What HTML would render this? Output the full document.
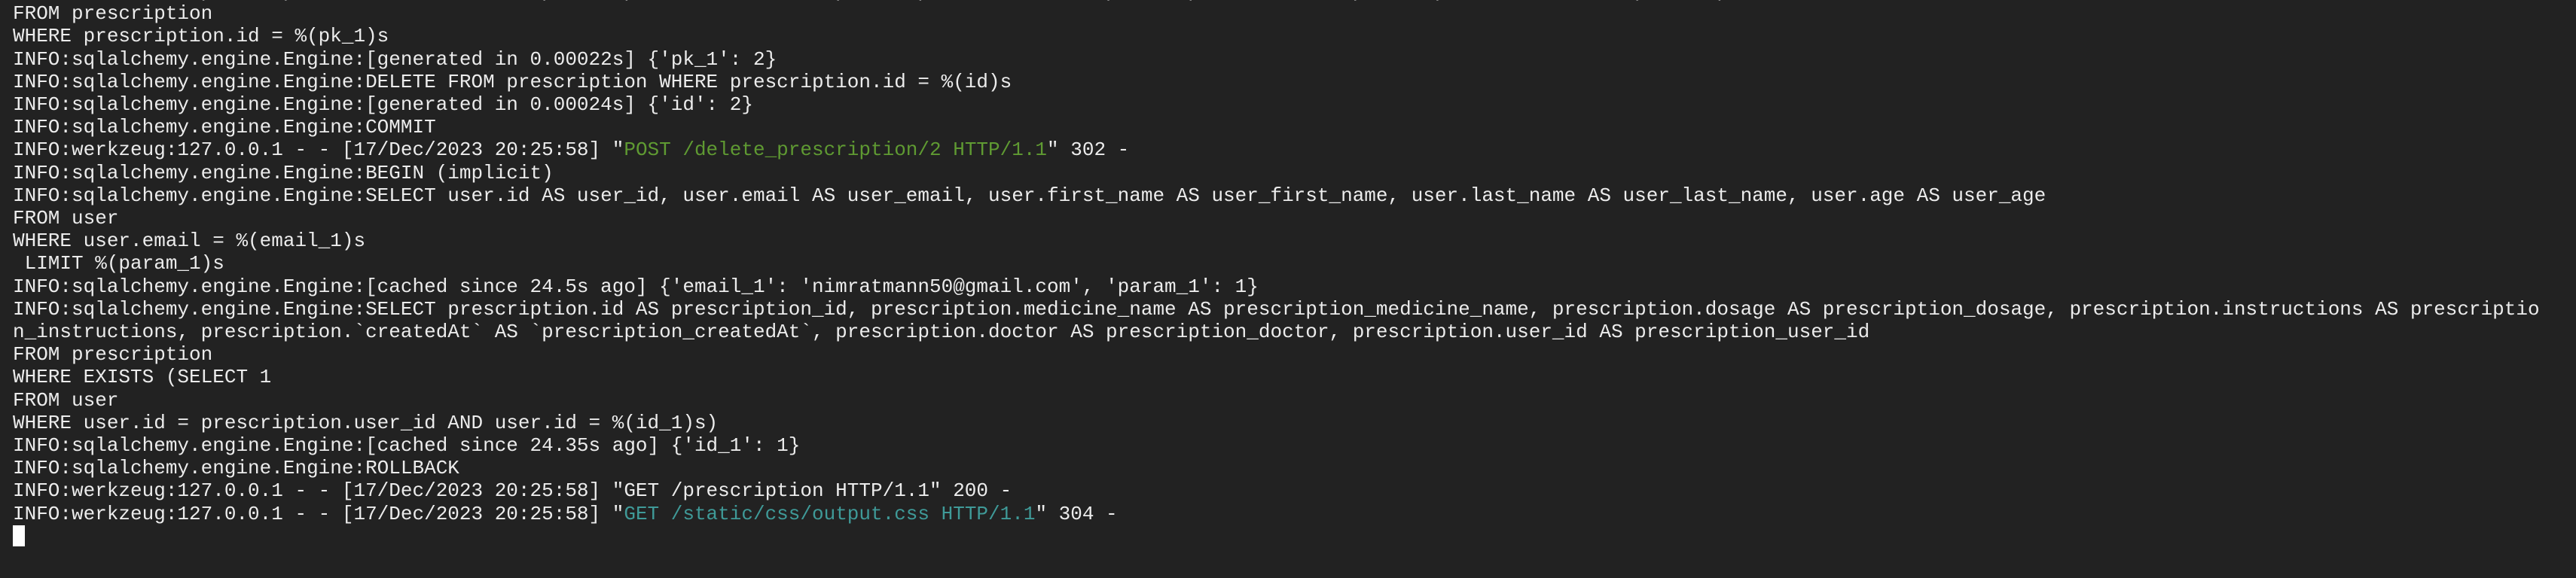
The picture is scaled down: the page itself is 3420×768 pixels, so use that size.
<!DOCTYPE html>
<html><head><meta charset="utf-8"><style>
html,body{margin:0;padding:0;background:#222222;width:3420px;height:768px;overflow:hidden}
pre{margin:0;position:absolute;left:17px;top:-27px;font-family:"Liberation Mono",monospace;font-size:26px;line-height:30.2px;color:#ececec;white-space:pre}
.g{color:#5f9a32}.t{color:#3f9a98}
.cur{display:inline-block;width:16px;height:28px;background:#fff;vertical-align:-6px}
</style></head><body><pre>n_instructions, prescription.`createdAt` AS `prescription_createdAt`, prescription.doctor AS prescription_doctor, prescription.user_id AS prescription_user_id
FROM prescription
WHERE prescription.id = %(pk_1)s
INFO:sqlalchemy.engine.Engine:[generated in 0.00022s] {'pk_1': 2}
INFO:sqlalchemy.engine.Engine:DELETE FROM prescription WHERE prescription.id = %(id)s
INFO:sqlalchemy.engine.Engine:[generated in 0.00024s] {'id': 2}
INFO:sqlalchemy.engine.Engine:COMMIT
INFO:werkzeug:127.0.0.1 - - [17/Dec/2023 20:25:58] "<span class="g">POST /delete_prescription/2 HTTP/1.1</span>" 302 -
INFO:sqlalchemy.engine.Engine:BEGIN (implicit)
INFO:sqlalchemy.engine.Engine:SELECT user.id AS user_id, user.email AS user_email, user.first_name AS user_first_name, user.last_name AS user_last_name, user.age AS user_age
FROM user
WHERE user.email = %(email_1)s
 LIMIT %(param_1)s
INFO:sqlalchemy.engine.Engine:[cached since 24.5s ago] {'email_1': 'nimratmann50@gmail.com', 'param_1': 1}
INFO:sqlalchemy.engine.Engine:SELECT prescription.id AS prescription_id, prescription.medicine_name AS prescription_medicine_name, prescription.dosage AS prescription_dosage, prescription.instructions AS prescriptio
n_instructions, prescription.`createdAt` AS `prescription_createdAt`, prescription.doctor AS prescription_doctor, prescription.user_id AS prescription_user_id
FROM prescription
WHERE EXISTS (SELECT 1
FROM user
WHERE user.id = prescription.user_id AND user.id = %(id_1)s)
INFO:sqlalchemy.engine.Engine:[cached since 24.35s ago] {'id_1': 1}
INFO:sqlalchemy.engine.Engine:ROLLBACK
INFO:werkzeug:127.0.0.1 - - [17/Dec/2023 20:25:58] "GET /prescription HTTP/1.1" 200 -
INFO:werkzeug:127.0.0.1 - - [17/Dec/2023 20:25:58] "<span class="t">GET /static/css/output.css HTTP/1.1</span>" 304 -
<span class="cur"></span></pre></body></html>
